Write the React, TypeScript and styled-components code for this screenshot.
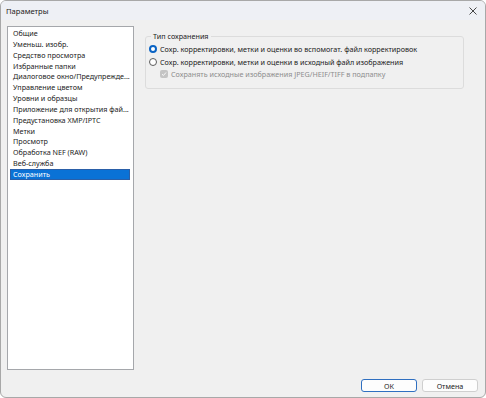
import styled, { createGlobalStyle } from "styled-components";

const GlobalStyle = createGlobalStyle`
  html, body {
    margin: 0;
    padding: 0;
    background: #ffffff;
  }
  body {
    font-family: "Noto Sans", "Liberation Sans", sans-serif;
  }
`;

const Window = styled.div`
  width: 486px;
  height: 398px;
  box-sizing: border-box;
  border: 1px solid #a8a8a8;
  border-radius: 6px;
  background: #f0f0f0;
  display: flex;
  flex-direction: column;
  overflow: hidden;
`;

const TitleBar = styled.div`
  height: 19px;
  background: #eef0f5;
  display: flex;
  align-items: center;
  justify-content: space-between;
  padding: 0 5px 0 5px;
  font-size: 7.6px;
  color: #1b1b1b;
`;

const CloseButton = styled.div`
  width: 9px;
  height: 9px;
  display: flex;
  align-items: center;
  justify-content: center;
  margin-right: 3px;
`;

const Body = styled.div`
  flex: 1;
  display: flex;
  flex-direction: column;
  padding: 6px 6px 5px 6px;
`;

const Main = styled.div`
  display: flex;
  gap: 11px;
  height: 344px;
`;

const CategoryList = styled.ul`
  list-style: none;
  margin: 0;
  width: 127px;
  height: 344px;
  box-sizing: border-box;
  border: 1px solid #a5a7ab;
  background: #ffffff;
  padding: 1px 3px 0 2px;
`;

const CategoryItem = styled.li<{ $selected?: boolean }>`
  height: 10.85px;
  line-height: 9px;
  box-sizing: border-box;
  padding-left: 2px;
  font-size: 7.2px;
  white-space: nowrap;
  color: ${(p) => (p.$selected ? "#ffffff" : "#1b1b1b")};
  background: ${(p) => (p.$selected ? "#0a72d6" : "transparent")};
  border: 1px solid ${(p) => (p.$selected ? "#2a5fa8" : "transparent")};
`;

const Settings = styled.div`
  flex: 1;
  padding-top: 5px;
`;

const GroupBox = styled.fieldset`
  margin: 0;
  width: 319px;
  height: 58px;
  box-sizing: border-box;
  border: 1px solid #dcdcdc;
  border-radius: 3px;
  padding: 2px 0 0 3px;
  display: flex;
  flex-direction: column;
`;

const GroupTitle = styled.legend`
  font-size: 7.2px;
  color: #1b1b1b;
  padding: 0 2px;
  margin-left: 2px;
  line-height: 10px;
`;

const OptionRow = styled.label<{ $disabled?: boolean; $indent?: boolean }>`
  display: flex;
  align-items: center;
  gap: 3px;
  height: 12.5px;
  padding-left: ${(p) => (p.$indent ? "11px" : "0")};
  font-size: 7.2px;
  color: ${(p) => (p.$disabled ? "#8d8d8d" : "#1b1b1b")};
  white-space: nowrap;
`;

const Radio = styled.span<{ $checked?: boolean }>`
  width: 8px;
  height: 8px;
  box-sizing: border-box;
  border-radius: 50%;
  border: ${(p) => (p.$checked ? "2.5px solid #0a63c4" : "1px solid #5c5c5c")};
  background: #ffffff;
  flex-shrink: 0;
`;

const CheckBox = styled.span`
  width: 8px;
  height: 8px;
  box-sizing: border-box;
  border-radius: 2px;
  background: #c4c4c4;
  display: flex;
  align-items: center;
  justify-content: center;
  flex-shrink: 0;
`;

const Footer = styled.div`
  display: flex;
  justify-content: flex-end;
  gap: 5px;
  margin-top: auto;
  padding-right: 1px;
`;

const Button = styled.button<{ $default?: boolean }>`
  width: 56px;
  height: 13px;
  box-sizing: border-box;
  padding: 0;
  font-family: inherit;
  font-size: 7.2px;
  color: #1b1b1b;
  background: #fdfdfd;
  border: 1px solid ${(p) => (p.$default ? "#2f6fc0" : "#cfcfcf")};
  border-radius: 3px;
  line-height: 10px;
`;

const categories = [
  "Общие",
  "Уменьш. изобр.",
  "Средство просмотра",
  "Избранные папки",
  "Диалоговое окно/Предупрежде...",
  "Управление цветом",
  "Уровни и образцы",
  "Приложение для открытия фай...",
  "Предустановка XMP/IPTC",
  "Метки",
  "Просмотр",
  "Обработка NEF (RAW)",
  "Веб-служба",
  "Сохранить",
];

export default function App() {
  return (
    <>
      <GlobalStyle />
      <Window>
        <TitleBar>
          <span>Параметры</span>
          <CloseButton>
            <svg width="8" height="8" viewBox="0 0 8 8">
              <path d="M0.5 0.5 L7.5 7.5 M7.5 0.5 L0.5 7.5" stroke="#333" strokeWidth="0.9" />
            </svg>
          </CloseButton>
        </TitleBar>
        <Body>
          <Main>
            <CategoryList>
              {categories.map((c) => (
                <CategoryItem key={c} $selected={c === "Сохранить"}>
                  {c}
                </CategoryItem>
              ))}
            </CategoryList>
            <Settings>
              <GroupBox>
                <GroupTitle>Тип сохранения</GroupTitle>
                <OptionRow>
                  <Radio $checked />
                  Сохр. корректировки, метки и оценки во вспомогат. файл корректировок
                </OptionRow>
                <OptionRow>
                  <Radio />
                  Сохр. корректировки, метки и оценки в исходный файл изображения
                </OptionRow>
                <OptionRow $disabled $indent>
                  <CheckBox>
                    <svg width="6" height="6" viewBox="0 0 6 6">
                      <path d="M1 3.2 L2.4 4.5 L5 1.5" stroke="#fff" strokeWidth="0.9" fill="none" />
                    </svg>
                  </CheckBox>
                  Сохранять исходные изображения JPEG/HEIF/TIFF в подпапку
                </OptionRow>
              </GroupBox>
            </Settings>
          </Main>
          <Footer>
            <Button $default>ОК</Button>
            <Button>Отмена</Button>
          </Footer>
        </Body>
      </Window>
    </>
  );
}
